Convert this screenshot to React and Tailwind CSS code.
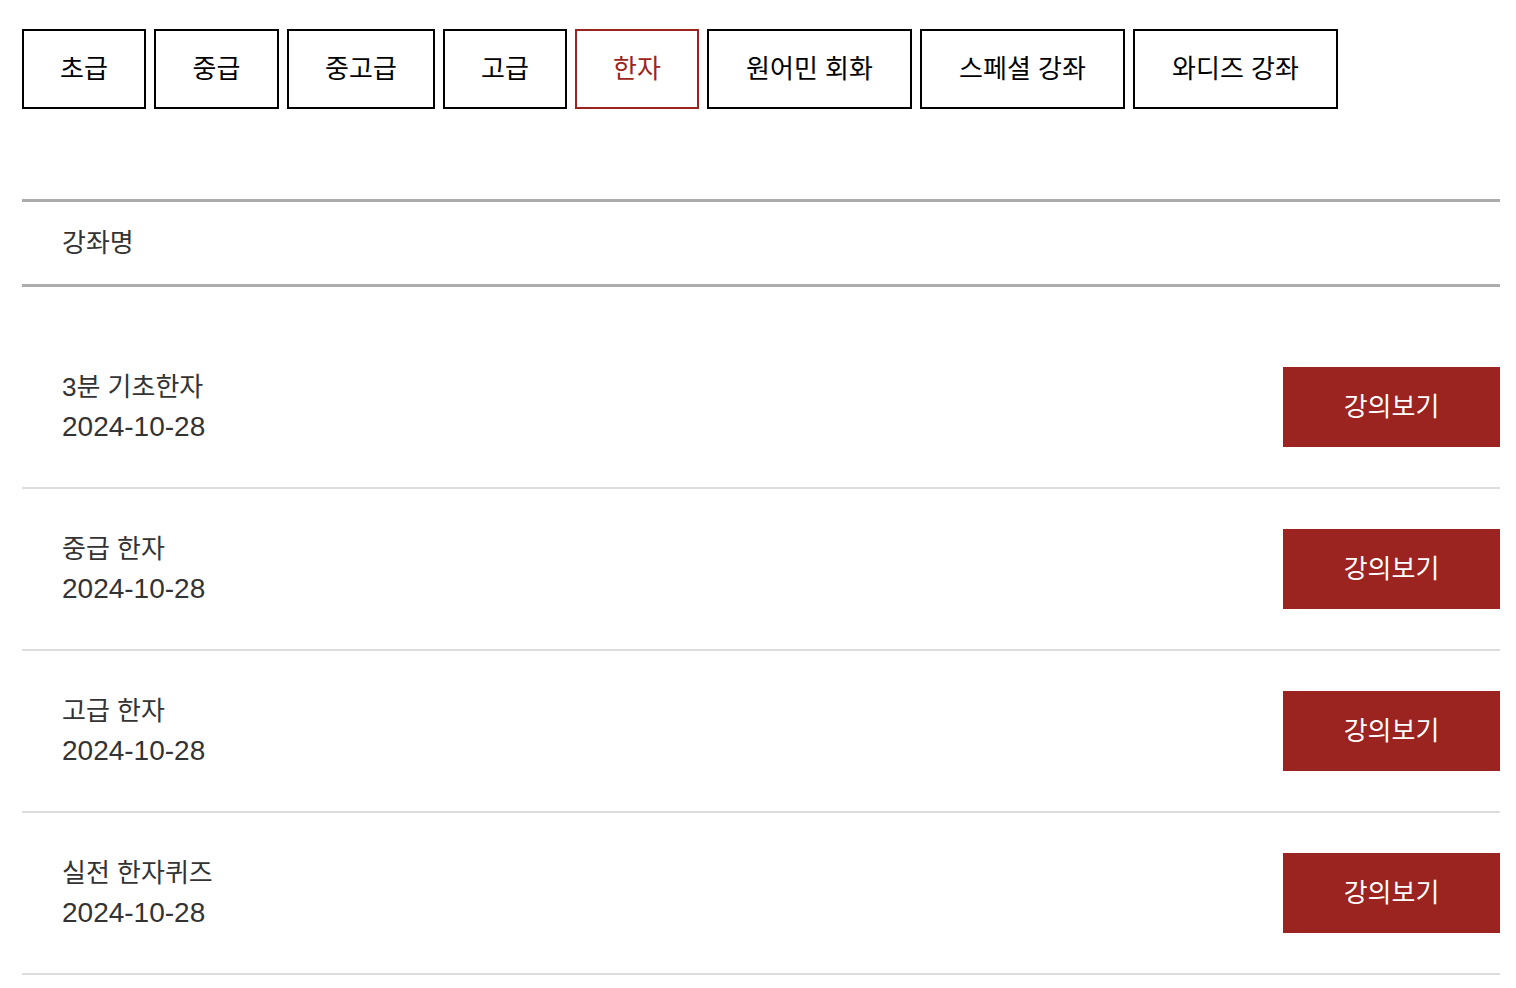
import React from "react";

const tabs = [
  { label: "초급", w: "w-[124px]" },
  { label: "중급", w: "w-[125px]" },
  { label: "중고급", w: "w-[148px]" },
  { label: "고급", w: "w-[124px]" },
  { label: "한자", w: "w-[124px]", active: true },
  { label: "원어민 회화", w: "w-[205px]" },
  { label: "스페셜 강좌", w: "w-[205px]" },
  { label: "와디즈 강좌", w: "w-[205px]" },
];

const rows = [
  { title: "3분 기초한자", date: "2024-10-28" },
  { title: "중급 한자", date: "2024-10-28" },
  { title: "고급 한자", date: "2024-10-28" },
  { title: "실전 한자퀴즈", date: "2024-10-28" },
];

const kr = { fontFamily: '"Liberation Sans", "Noto Sans CJK KR", sans-serif' };

export default function App() {
  return (
    <div className="min-h-[988px] bg-white pl-[22px] pt-[29px]" style={kr}>
      <div className="w-[1478px]">
        <div className="flex gap-[8px]">
          {tabs.map((t) => (
            <div
              key={t.label}
              className={`${t.w} h-[80px] flex items-center justify-center border-2 text-[26px] leading-none ${
                t.active ? "border-[#9b2320] text-[#9b2320]" : "border-black text-black"
              }`}
            >
              {t.label}
            </div>
          ))}
        </div>

        <div className="mt-[90px] border-t-[3px] border-b-[3px] border-[#acacac] h-[88px] flex items-center pl-[40px] text-[26px] text-[#333]">
          강좌명
        </div>

        <div className="mt-[40px]">
          {rows.map((r) => (
            <div
              key={r.title}
              className="flex items-center justify-between py-[40px] border-b-2 border-[#dddddd]"
            >
              <div className="pl-[40px] text-[#333]">
                <div className="text-[26px] leading-[40px]">{r.title}</div>
                <div className="text-[28px] leading-[40px]">{r.date}</div>
              </div>
              <div className="w-[217px] h-[80px] bg-[#9b2320] text-white text-[26px] flex items-center justify-center">
                강의보기
              </div>
            </div>
          ))}
        </div>
      </div>
    </div>
  );
}
